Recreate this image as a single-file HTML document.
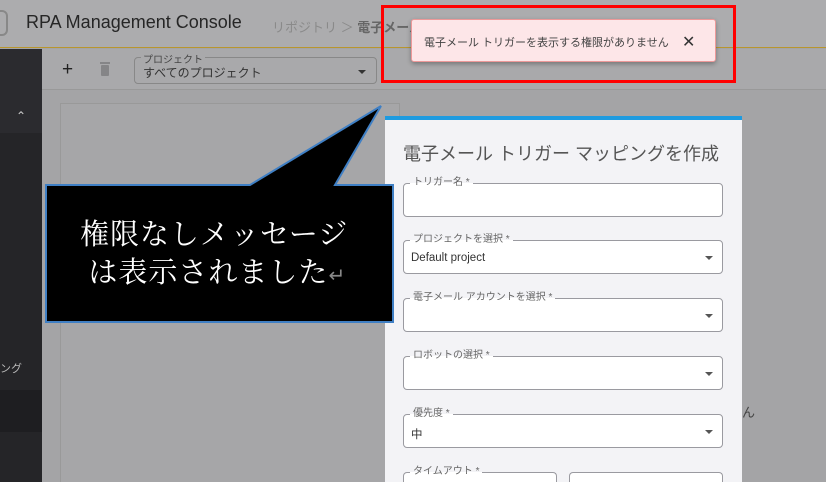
<!DOCTYPE html>
<html style="width:826px;height:482px;overflow:hidden"><head><meta charset="utf-8"><style>
*{margin:0;padding:0;box-sizing:border-box}
body{width:826px;height:482px;overflow:hidden;position:relative;background:#a4a4a6;font-family:"Liberation Sans","Noto Sans CJK JP",sans-serif}
.abs{position:absolute}
.fld{position:absolute;left:403px;width:320px;height:34px;border:1px solid #9a9aa0;border-radius:4px;background:#fff}
.fld .lb{position:absolute;top:-7px;left:6px;padding:0 3px;font-size:10px;color:#666;background:linear-gradient(#f3f3f6 50%,#fff 50%);line-height:12px}
.fld .v{position:absolute;left:7px;top:11px;font-size:11.5px;color:#333}
.fld .ar{position:absolute;right:9px;top:15px;border-left:4px solid transparent;border-right:4px solid transparent;border-top:4px solid #555}
</style></head><body>
<div class="abs" style="left:0;top:0;width:826px;height:48px;background:#acacae;border-bottom:1px solid #b8962e"></div>
<div class="abs" style="left:0;top:10px;width:8px;height:26px;border-radius:0 6px 6px 0;border:2px solid #888;border-left:none"></div>
<div class="abs" style="left:26px;top:12px;font-size:18px;color:#262626">RPA Management Console</div>
<div class="abs" style="left:272px;top:17px;font-size:13px;color:#8a8a8a">リポジトリ ＞ <span style="color:#666;font-weight:bold">電子メール</span></div>
<div class="abs" style="left:0;top:49px;width:42px;height:433px;background:#2b2b2f"></div>
<div class="abs" style="left:0;top:133px;width:42px;height:349px;background:#252528"></div>
<div class="abs" style="left:0;top:390px;width:42px;height:42px;background:#1e1e21"></div>
<div class="abs" style="left:16px;top:109px;color:#ccc;font-size:12px">&#8963;</div>
<div class="abs" style="left:0;top:360px;color:#bbb;font-size:11px">ング</div>
<div class="abs" style="left:42px;top:49px;width:784px;height:41px;background:#a9a9ab;border-bottom:1px solid #999"></div>
<div class="abs" style="left:62px;top:59px;font-size:19px;color:#222">+</div>
<div class="abs" style="left:101px;top:65px;width:8px;height:11px;background:#858587;border-radius:1px"></div>
<div class="abs" style="left:100px;top:62px;width:10px;height:2px;background:#858587"></div>
<div class="abs" style="left:134px;top:57px;width:243px;height:27px;border:1px solid #888;border-radius:4px"></div>
<div class="abs" style="left:141px;top:51px;font-size:10px;color:#444;background:#a9a9ab;padding:0 2px">プロジェクト</div>
<div class="abs" style="left:143px;top:64px;font-size:12px;color:#333">すべてのプロジェクト</div>
<div class="abs" style="left:358px;top:70px;border-left:4px solid transparent;border-right:4px solid transparent;border-top:4px solid #333"></div>
<div class="abs" style="left:60px;top:103px;width:340px;height:390px;border:1px solid #999;background:#a6a6a8"></div>
<div class="abs" style="left:742px;top:402px;font-size:13px;color:#444">ん</div>
<div class="abs" style="left:381px;top:5px;width:355px;height:78px;border:3px solid #f00"></div>
<div class="abs" style="left:411px;top:19px;width:305px;height:43px;background:#fde6e8;border:1px solid #e99;border-radius:3px;box-shadow:0 2px 5px rgba(0,0,0,.3)"></div>
<div class="abs" style="left:424px;top:34px;font-size:11px;color:#444">電子メール トリガーを表示する権限がありません</div>
<div class="abs" style="left:682px;top:32px;font-size:16px;color:#333">✕</div>
<div class="abs" style="left:385px;top:116px;width:357px;height:366px;background:#f3f3f6;border-top:4px solid #1e9be0;overflow:hidden">
</div>
<div class="abs" style="left:403px;top:140px;font-size:18px;color:#555">電子メール トリガー マッピングを作成</div>
<div class="fld" style="top:183px"><span class="lb">トリガー名 *</span></div>
<div class="fld" style="top:240px"><span class="lb">プロジェクトを選択 *</span><span class="v">Default project</span><span class="ar"></span></div>
<div class="fld" style="top:298px"><span class="lb">電子メール アカウントを選択 *</span><span class="ar"></span></div>
<div class="fld" style="top:356px"><span class="lb">ロボットの選択 *</span><span class="ar"></span></div>
<div class="fld" style="top:414px"><span class="lb">優先度 *</span><span class="v">中</span><span class="ar"></span></div>
<div class="fld" style="top:472px;width:154px;height:10px;border-bottom:none;border-radius:4px 4px 0 0"><span class="lb">タイムアウト *</span></div>
<div class="fld" style="top:472px;left:569px;width:154px;height:10px;border-bottom:none;border-radius:4px 4px 0 0"></div>
<svg class="abs" style="left:0;top:0" width="826" height="482">
<polygon points="46,185 250,185 381,106 335,185 393,185 393,322 46,322" fill="#000" stroke="#3f7fc4" stroke-width="2"/>
</svg>
<div class="abs" style="left:80px;top:214px;font-family:'Noto Serif CJK SC','Noto Serif CJK JP',serif;font-size:29px;color:#fff;line-height:38px;letter-spacing:1px;white-space:nowrap">権限なしメッセージ<br>&nbsp;は表示されました<span style="color:#888;font-size:20px">↵</span></div>
</body></html>
